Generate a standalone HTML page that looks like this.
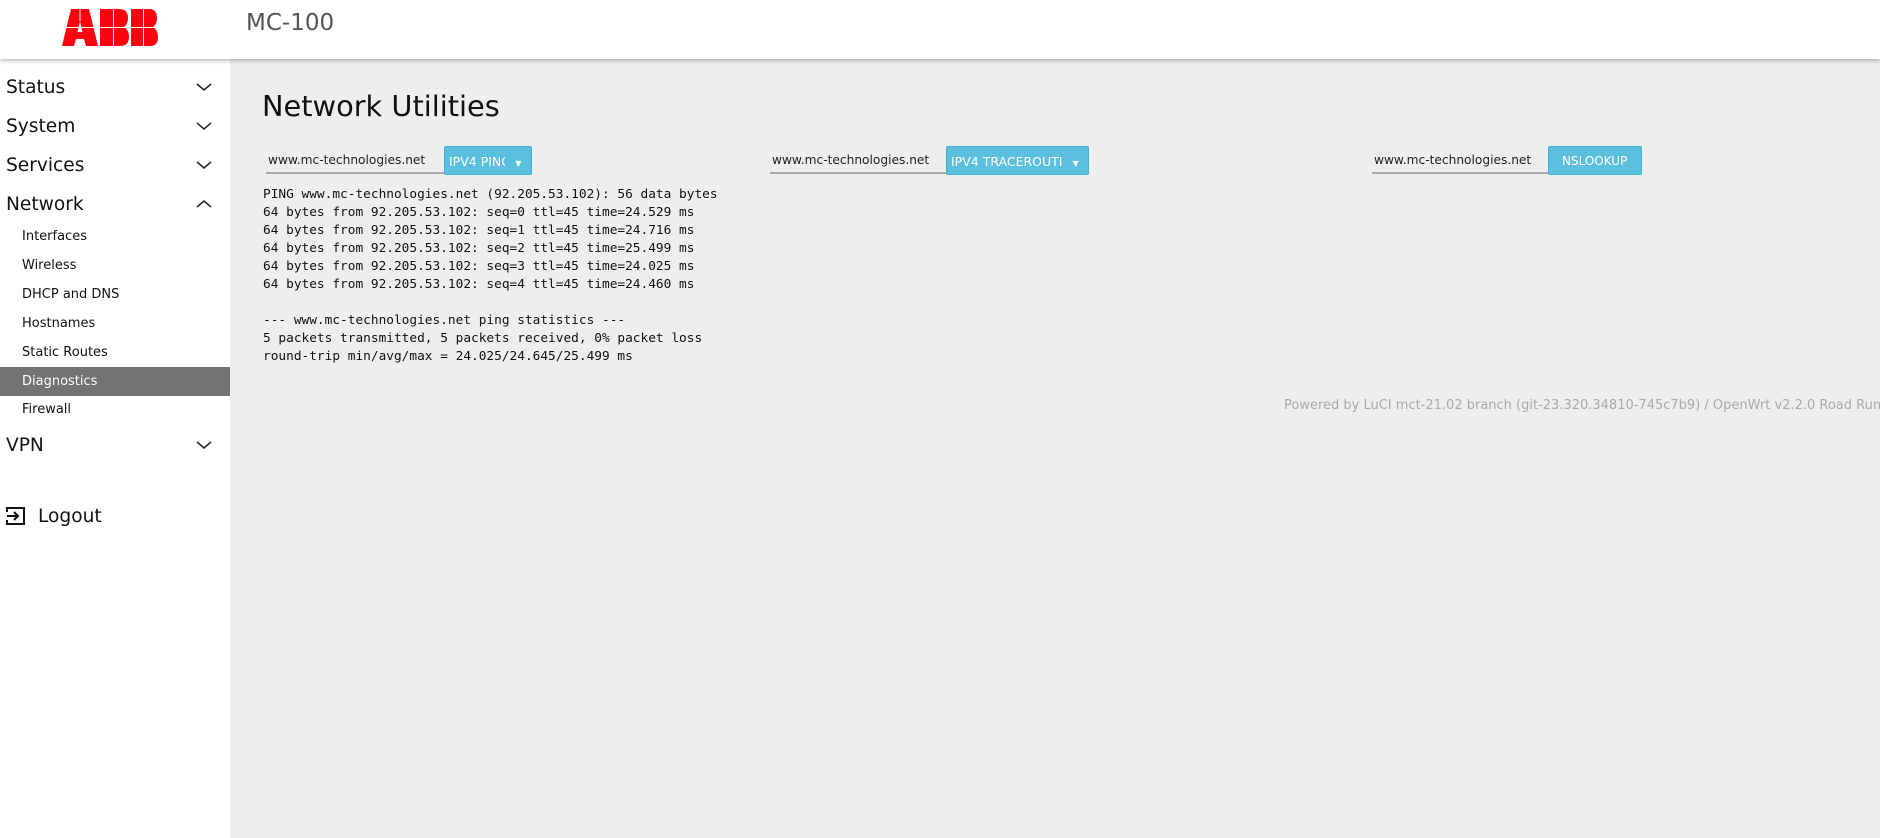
<!DOCTYPE html>
<html><head><meta charset="utf-8">
<style>
*{margin:0;padding:0;box-sizing:border-box}
body{width:1880px;height:838px;overflow:hidden;background:#eee;font-family:"DejaVu Sans","Liberation Sans",sans-serif;position:relative}
.hdr{position:absolute;left:0;top:0;width:1880px;height:59px;background:#fff;box-shadow:0 2px 4px rgba(0,0,0,.25);z-index:2}
.side{position:absolute;left:0;top:59px;width:230px;height:779px;background:#fff}
.abs{position:absolute;white-space:nowrap}
.top{font-size:18.6px;color:#111;left:6px}
.chev{position:absolute;left:196px;width:16px;height:10px}
.sub{font-size:13px;color:#111;left:22px}
.inp{position:absolute;height:28px;border-bottom:2px solid #aaa;font-size:12.2px;color:#222;padding-top:7px;padding-left:2px}
.btn{position:absolute;top:146px;height:29px;background:#5bc0de;border:1px solid #46b0d0;border-radius:2px;color:#fff;font-size:12.5px;padding:7px 0 0 4px;overflow:hidden}
pre{position:absolute;left:263px;top:186px;font-family:"DejaVu Sans Mono","Liberation Mono",monospace;font-size:12.8px;line-height:18px;color:#111}
</style></head><body>
<div class="hdr">
<svg class="abs" style="left:62px;top:9px" width="96" height="37" viewBox="0 0 96 37">
<g fill="#ff000f">
<path d="M9 0 H27 L36 37 H24 L22 30 H14 L12 37 H0 Z M15.5 23 H20.5 L18 12 Z" fill-rule="evenodd"/>
<path d="M38 0 H57 Q66 0 66 9 Q66 15 62 18 Q67 21 67 28 Q67 37 58 37 H38 Z"/>
<path d="M69 0 H87 Q95 0 95 9 Q95 15 91 18 Q96 21 96 28 Q96 37 88 37 H69 Z"/>
</g>
<g fill="#fff">
<rect x="17.5" y="0" width="1" height="12"/><rect x="17.5" y="30" width="1" height="7"/><rect x="0" y="18" width="36" height="1"/>
<rect x="51" y="0" width="1" height="37"/><rect x="38" y="18" width="29" height="1"/>
<rect x="81" y="0" width="1" height="37"/><rect x="69" y="18" width="27" height="1"/>
</g>
</svg>
<div class="abs" style="left:246px;top:10px;font-size:23px;color:#555">MC-100</div>
</div>
<div class="side"></div>
<div class="abs top" style="top:77px">Status</div>
<div class="abs top" style="top:116px">System</div>
<div class="abs top" style="top:155px">Services</div>
<div class="abs top" style="top:194px">Network</div>
<svg class="chev" style="top:82px" viewBox="0 0 16 10"><path d="M1 2 L8 8 L15 2" fill="none" stroke="#222" stroke-width="1.5"/></svg>
<svg class="chev" style="top:121px" viewBox="0 0 16 10"><path d="M1 2 L8 8 L15 2" fill="none" stroke="#222" stroke-width="1.5"/></svg>
<svg class="chev" style="top:160px" viewBox="0 0 16 10"><path d="M1 2 L8 8 L15 2" fill="none" stroke="#222" stroke-width="1.5"/></svg>
<svg class="chev" style="top:199px" viewBox="0 0 16 10"><path d="M1 8 L8 2 L15 8" fill="none" stroke="#222" stroke-width="1.5"/></svg>
<div class="abs sub" style="top:229px">Interfaces</div>
<div class="abs sub" style="top:258px">Wireless</div>
<div class="abs sub" style="top:287px">DHCP and DNS</div>
<div class="abs sub" style="top:316px">Hostnames</div>
<div class="abs sub" style="top:345px">Static Routes</div>
<div class="abs" style="left:0;top:367px;width:230px;height:29px;background:#737373"></div>
<div class="abs sub" style="top:374px;color:#fff">Diagnostics</div>
<div class="abs sub" style="top:402px">Firewall</div>
<div class="abs top" style="top:435px">VPN</div>
<svg class="chev" style="top:440px" viewBox="0 0 16 10"><path d="M1 2 L8 8 L15 2" fill="none" stroke="#222" stroke-width="1.5"/></svg>
<svg class="abs" style="left:6px;top:506px" width="20" height="20" viewBox="0 0 20 20"><path d="M1 6 V2 H18 V18 H1 V14" fill="none" stroke="#111" stroke-width="2"/><path d="M1 10 H12 M8 6 L12 10 L8 14" fill="none" stroke="#111" stroke-width="2"/></svg>
<div class="abs" style="left:38px;top:506px;font-size:18.6px;color:#111">Logout</div>

<div class="abs" style="left:262px;top:89px;font-size:28.8px;color:#111">Network Utilities</div>
<div class="inp" style="left:266px;top:146px;width:178px">www.mc-technologies.net</div>
<div class="btn" style="left:444px;width:88px">IPV4 PIN<span style="display:inline-block;width:4px;overflow:hidden;vertical-align:top">G</span><span style="font-size:8px;margin-left:10px">▼</span></div>
<div class="inp" style="left:770px;top:146px;width:176px">www.mc-technologies.net</div>
<div class="btn" style="left:946px;width:143px">IPV4 TRACEROUTI<span style="font-size:8px;margin-left:10px">▼</span></div>
<div class="inp" style="left:1372px;top:146px;width:176px">www.mc-technologies.net</div>
<div class="btn" style="left:1548px;width:94px;padding-left:13px;font-size:12px">NSLOOKUP</div>
<pre>PING www.mc-technologies.net (92.205.53.102): 56 data bytes
64 bytes from 92.205.53.102: seq=0 ttl=45 time=24.529 ms
64 bytes from 92.205.53.102: seq=1 ttl=45 time=24.716 ms
64 bytes from 92.205.53.102: seq=2 ttl=45 time=25.499 ms
64 bytes from 92.205.53.102: seq=3 ttl=45 time=24.025 ms
64 bytes from 92.205.53.102: seq=4 ttl=45 time=24.460 ms

--- www.mc-technologies.net ping statistics ---
5 packets transmitted, 5 packets received, 0% packet loss
round-trip min/avg/max = 24.025/24.645/25.499 ms</pre>
<div class="abs" style="left:1284px;top:398px;font-size:13px;color:#aaa">Powered by LuCI mct-21.02 branch (git-23.320.34810-745c7b9) / OpenWrt v2.2.0 Road Runner</div>
</body></html>
